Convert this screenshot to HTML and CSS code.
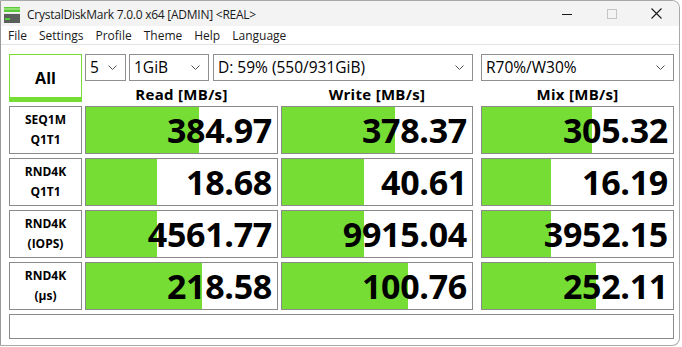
FILE: index.html
```html
<!DOCTYPE html>
<html lang="en">
<head>
<meta charset="utf-8">
<title>CrystalDiskMark 7.0.0 x64 [ADMIN] &lt;REAL&gt;</title>
<link rel="stylesheet" href="styles.css">
</head>
<body>
<div class="window">
  <div class="titlebar">
    <svg class="app-icon" width="16" height="16" viewBox="0 0 16 16">
      <rect x="0" y="0" width="16" height="5" fill="#5cc93a"/>
      <rect x="0" y="1" width="16" height="2" fill="#8fe070"/>
      <rect x="0" y="6" width="16" height="10" fill="#5a5f5c"/>
      <rect x="0" y="6" width="16" height="1" fill="#e8e8e8"/>
      <rect x="1" y="11" width="5" height="2" fill="#52d03a"/>
    </svg>
    <span class="title">CrystalDiskMark 7.0.0 x64 [ADMIN] &lt;REAL&gt;</span>
    <div class="caption">
      <span class="cap-btn"><svg width="10" height="10" viewBox="0 0 10 10"><line x1="0" y1="5.5" x2="10" y2="5.5" stroke="#1a1a1a" stroke-width="1"/></svg></span>
      <span class="cap-btn"><svg width="10" height="10" viewBox="0 0 10 10"><rect x="0.5" y="0.5" width="9" height="9" fill="none" stroke="#c4c4c4" stroke-width="1"/></svg></span>
      <span class="cap-btn"><svg width="11" height="11" viewBox="0 0 11 11"><path d="M0.5 0.5 L10.5 10.5 M10.5 0.5 L0.5 10.5" stroke="#1a1a1a" stroke-width="1.1"/></svg></span>
    </div>
  </div>
  <div class="menubar">
    <span class="menu-item">File</span>
    <span class="menu-item">Settings</span>
    <span class="menu-item">Profile</span>
    <span class="menu-item">Theme</span>
    <span class="menu-item">Help</span>
    <span class="menu-item">Language</span>
  </div>
  <div class="client">
    <div class="grid">
      <div class="all-btn">All</div>
      <div class="combo-row">
        <div class="combo c-count"><span>5</span><svg class="chev" width="9" height="5" viewBox="0 0 9 5"><polyline points="0.5,0.5 4.5,4.5 8.5,0.5" fill="none" stroke="#555" stroke-width="1"/></svg></div>
        <div class="combo c-size"><span>1GiB</span><svg class="chev" width="9" height="5" viewBox="0 0 9 5"><polyline points="0.5,0.5 4.5,4.5 8.5,0.5" fill="none" stroke="#555" stroke-width="1"/></svg></div>
        <div class="combo c-drive"><span>D: 59% (550/931GiB)</span><svg class="chev" width="9" height="5" viewBox="0 0 9 5"><polyline points="0.5,0.5 4.5,4.5 8.5,0.5" fill="none" stroke="#555" stroke-width="1"/></svg></div>
      </div>
      <div class="combo c-mix mix"><span>R70%/W30%</span><svg class="chev" width="9" height="5" viewBox="0 0 9 5"><polyline points="0.5,0.5 4.5,4.5 8.5,0.5" fill="none" stroke="#555" stroke-width="1"/></svg></div>

      <div class="head">Read [MB/s]</div>
      <div class="head">Write [MB/s]</div>
      <div class="head mix">Mix [MB/s]</div>

      <div class="label">SEQ1M<br>Q1T1</div>
      <div class="cell" style="--fill:113px">384.97</div>
      <div class="cell" style="--fill:113px">378.37</div>
      <div class="cell mix" style="--fill:110px">305.32</div>

      <div class="label">RND4K<br>Q1T1</div>
      <div class="cell" style="--fill:71px">18.68</div>
      <div class="cell" style="--fill:82px">40.61</div>
      <div class="cell mix" style="--fill:69px">16.19</div>

      <div class="label">RND4K<br>(IOPS)</div>
      <div class="cell" style="--fill:71px">4561.77</div>
      <div class="cell" style="--fill:82px">9915.04</div>
      <div class="cell mix" style="--fill:69px">3952.15</div>

      <div class="label">RND4K<br>(µs)</div>
      <div class="cell" style="--fill:116px">218.58</div>
      <div class="cell" style="--fill:126px">100.76</div>
      <div class="cell mix" style="--fill:114px">252.11</div>

      <div class="comment"></div>
    </div>
  </div>
</div>
</body>
</html>
```

FILE: styles.css
```css
* { box-sizing: border-box; }
html, body { margin: 0; padding: 0; background: #ffffff; }
body { font-family: "Open Sans", "Noto Sans", sans-serif; color: #000; }

.window {
  width: 680px;
  height: 346px;
  border: 1px solid #a9a9a9;
  border-left-color: #9a9a9a;
  border-radius: 0 8px 8px 0;
  overflow: hidden;
  background: #ffffff;
}

.titlebar {
  height: 25px;
  background: #f3f3f3;
  display: flex;
  align-items: center;
}
.app-icon { margin-left: 3px; margin-top: 2px; }
.title {
  margin-left: 7px;
  font-size: 12px;
  letter-spacing: -0.25px;
  color: #1a1a1a;
  margin-top: 1px;
}
.caption { margin-left: auto; display: flex; height: 100%; }
.cap-btn {
  width: 45px;
  display: flex;
  align-items: center;
  justify-content: center;
}

.menubar {
  height: 19px;
  display: flex;
  align-items: center;
  padding-left: 7px;
  gap: 12px;
  border-bottom: 1px solid #e3e3e3;
  font-size: 12px;
  letter-spacing: 0;
  color: #1a1a1a;
}
.menu-item { line-height: 17px; }

.client { padding: 9px 0 0 8px; }

.grid {
  display: grid;
  grid-template-columns: 73px 193px 192px 198px;
  grid-template-rows: 27px 17px 48px 48px 48px 48px 25px;
  column-gap: 3px;
  row-gap: 4px;
}
.mix { margin-left: 5px; }

.all-btn {
  grid-row: 1 / span 2;
  border: 1px solid #76dd35;
  border-bottom: 5px solid #76dd35;
  display: flex;
  align-items: center;
  justify-content: center;
  font-weight: 700;
  font-size: 16px;
  padding-top: 3px;
}

.combo-row {
  grid-column: 2 / span 2;
  display: flex;
  gap: 3px;
}
.combo {
  border: 1px solid #8f8f8f;
  display: flex;
  align-items: center;
  padding: 0 8px 1px 4px;
  font-size: 15.5px;
  letter-spacing: 0;
}
.combo span { flex: 1; white-space: nowrap; overflow: hidden; }
.chev { flex: none; }
.c-count { width: 41px; }
.c-size { width: 80px; margin-right: 1px; }
.c-drive { flex: 1; }

.head {
  font-weight: 700;
  font-size: 15px;
  letter-spacing: 0.3px;
  text-align: center;
  line-height: 17px;
  padding-top: 1px;
}

.label {
  border: 1px solid #8a8a8a;
  display: flex;
  align-items: center;
  justify-content: center;
  text-align: center;
  font-weight: 700;
  font-size: 12px;
  line-height: 20px;
}

.cell {
  border: 1px solid #8a8a8a;
  background: linear-gradient(to right, #76dd35 var(--fill), #ffffff var(--fill));
  display: flex;
  align-items: center;
  justify-content: flex-end;
  padding-right: 5px;
  font-weight: 700;
  font-size: 34px;
  letter-spacing: -0.3px;
}

.comment {
  grid-column: 1 / -1;
  border: 1px solid #8a8a8a;
}
```
